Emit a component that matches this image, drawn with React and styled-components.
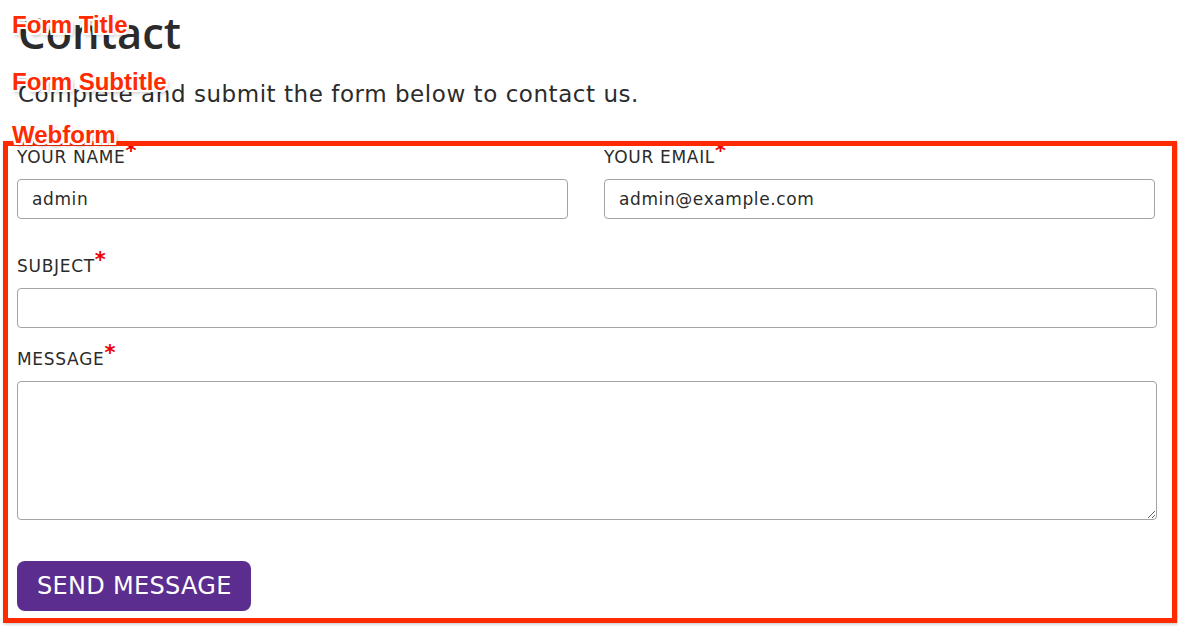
import React from 'react'
import styled, { createGlobalStyle } from 'styled-components'

const GlobalStyle = createGlobalStyle`
    body {
        margin: 0;
        background: #ffffff;
        font-family: "DejaVu Sans", Verdana, sans-serif;
        color: #2b2b2b;
    }
`

const Page = styled.div`
    position: relative;
    width: 1178px;
    height: 628px;
    overflow: hidden;
    padding: 8px 0 0 18px;
    box-sizing: border-box;
`

const Title = styled.h1`
    margin: 0;
    font-family: "Open Sans", sans-serif;
    font-weight: 600;
    font-size: 43.5px;
    line-height: 50px;
    color: #2b2b2b;
`

const Subtitle = styled.p`
    margin: 22px 0 0;
    font-size: 23px;
    line-height: 28px;
    letter-spacing: 0.55px;
`

const Form = styled.form`
    margin-top: 39px;
    margin-left: -1px;
    width: 1140px;
    display: flex;
    flex-direction: column;
`

const Row = styled.div`
    display: grid;
    grid-template-columns: 551px 551px;
    column-gap: 36px;
    margin-bottom: ${p => p.gap || 0}px;
`

const Field = styled.div`
    display: flex;
    flex-direction: column;
    margin-bottom: ${p => p.gap || 0}px;
`

const Label = styled.label`
    font-size: 17px;
    line-height: 20px;
    letter-spacing: 0.7px;
    text-transform: uppercase;
    color: #2b2b2b;
    margin-bottom: 11px;
`

const Required = styled.span`
    display: inline-block;
    color: #ee0000;
    font-size: 21px;
    font-weight: bold;
    line-height: 1;
    vertical-align: top;
    position: relative;
    top: -6px;
    letter-spacing: 0;
`

const Input = styled.input`
    box-sizing: border-box;
    height: 40px;
    width: 100%;
    border: 1px solid #a3a3a3;
    border-radius: 4px;
    padding: 0 14px;
    font-family: "DejaVu Sans", Verdana, sans-serif;
    font-size: 17px;
    letter-spacing: 0.6px;
    color: #2b2b2b;
    background: #fff;
    outline: none;
`

const TextArea = styled.textarea`
    box-sizing: border-box;
    height: 139px;
    width: 100%;
    border: 1px solid #a3a3a3;
    border-radius: 4px;
    padding: 10px 14px;
    font-family: "DejaVu Sans", Verdana, sans-serif;
    font-size: 17px;
    resize: vertical;
    outline: none;
`

const SendButton = styled.button`
    align-self: flex-start;
    height: 50px;
    padding: 0 19px 0 20px;
    background: #5b2d8e;
    color: #ffffff;
    border: none;
    border-radius: 8px;
    font-family: "DejaVu Sans", Verdana, sans-serif;
    font-size: 24px;
    letter-spacing: 0.3px;
    text-transform: uppercase;
    cursor: pointer;
`

/* annotation overlay drawn on top of the screenshot */
const Tag = styled.span`
    position: absolute;
    left: 12px;
    top: ${p => p.top}px;
    font-family: "Liberation Sans", Arial, sans-serif;
    font-weight: bold;
    font-size: 24px;
    line-height: 24px;
    color: #ff2a00;
    text-shadow:
        -2px 0 0 #fff, 2px 0 0 #fff, 0 -2px 0 #fff, 0 2px 0 #fff,
        -2px -2px 0 #fff, 2px 2px 0 #fff, -2px 2px 0 #fff, 2px -2px 0 #fff,
        2px 3px 4px rgba(0, 0, 0, 0.4);
`

const Frame = styled.div`
    position: absolute;
    left: 3px;
    top: 141px;
    width: 1174px;
    height: 482px;
    box-sizing: border-box;
    border: 5px solid #ff2a00;
    box-shadow: 1px 1px 3px rgba(0, 0, 0, 0.25);
    pointer-events: none;
`

const App = () => {
    return (
        <>
            <GlobalStyle />
            <Page>
                <Title>Contact</Title>
                <Subtitle>Complete and submit the form below to contact us.</Subtitle>
                <Form onSubmit={e => e.preventDefault()}>
                    <Row gap={37}>
                        <Field>
                            <Label>Your Name<Required>*</Required></Label>
                            <Input defaultValue="admin" />
                        </Field>
                        <Field>
                            <Label>Your Email<Required>*</Required></Label>
                            <Input defaultValue="admin@example.com" />
                        </Field>
                    </Row>
                    <Field gap={21}>
                        <Label>Subject<Required>*</Required></Label>
                        <Input />
                    </Field>
                    <Field gap={41}>
                        <Label>Message<Required>*</Required></Label>
                        <TextArea />
                    </Field>
                    <SendButton type="submit">Send Message</SendButton>
                </Form>
                <Frame />
                <Tag top={13}>Form Title</Tag>
                <Tag top={70}>Form Subtitle</Tag>
                <Tag top={123}>Webform</Tag>
            </Page>
        </>
    )
}

export default App
